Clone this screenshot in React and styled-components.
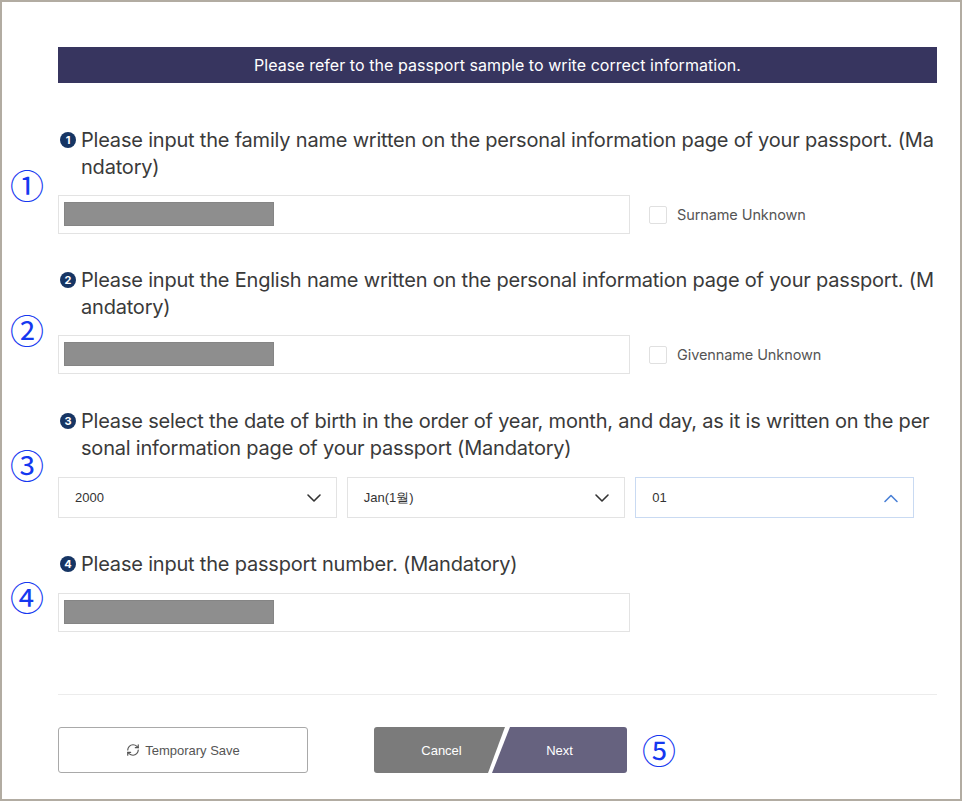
import React from 'react'
import styled, { createGlobalStyle } from 'styled-components'
import { RefreshCw } from 'lucide-react'

const GlobalStyle = createGlobalStyle`
    html, body {
        margin: 0;
        padding: 0;
        background: #fff;
    }
    * {
        box-sizing: border-box;
    }
`

const fields = [
    {
        no: 1,
        mark: '①',
        markTop: 41,
        gap: 44,
        title: 'Please input the family name written on the personal information page of your passport. (Mandatory)',
        check: 'Surname Unknown',
    },
    {
        no: 2,
        mark: '②',
        markTop: 46,
        gap: 33,
        title: 'Please input the English name written on the personal information page of your passport. (Mandatory)',
        check: 'Givenname Unknown',
    },
]

const Chevron = ({ up, color }) => (
    <svg width="16" height="10" viewBox="0 0 16 10">
        <path
            d={up ? 'M2 8.5 L8 2.5 L14 8.5' : 'M2 2 L8 8 L14 2'}
            fill="none"
            stroke={color}
            strokeWidth="1.6"
            strokeLinecap="round"
            strokeLinejoin="round"
        />
    </svg>
)

const App = () => {
    return (
        <Frame>
            <GlobalStyle />
            <Banner>Please refer to the passport sample to write correct information.</Banner>

            {fields.map(f => (
                <Section key={f.no} gap={f.gap}>
                    <Mark top={f.markTop}>{f.mark}</Mark>
                    <Heading>
                        <Badge>{f.no}</Badge>
                        <span>{f.title}</span>
                    </Heading>
                    <FieldRow>
                        <TextBox>
                            <Redacted />
                        </TextBox>
                        <CheckLabel>
                            <CheckBox />
                            {f.check}
                        </CheckLabel>
                    </FieldRow>
                </Section>
            ))}

            <Section gap={34}>
                <Mark top={40}>③</Mark>
                <Heading>
                    <Badge>3</Badge>
                    <span>
                        Please select the date of birth in the order of year, month, and day, as it is written on the
                        personal information page of your passport (Mandatory)
                    </span>
                </Heading>
                <SelectRow>
                    <Select>
                        <span>2000</span>
                        <Chevron color="#333" />
                    </Select>
                    <Select>
                        <span>Jan(1월)</span>
                        <Chevron color="#333" />
                    </Select>
                    <Select open>
                        <span>01</span>
                        <Chevron up color="#4a80d6" />
                    </Select>
                </SelectRow>
            </Section>

            <Section gap={33}>
                <Mark top={29}>④</Mark>
                <Heading>
                    <Badge>4</Badge>
                    <span>Please input the passport number. (Mandatory)</span>
                </Heading>
                <FieldRow space={15}>
                    <TextBox>
                        <Redacted />
                    </TextBox>
                </FieldRow>
            </Section>

            <Divider />

            <ButtonRow>
                <SaveButton>
                    <RefreshCw size={14} strokeWidth={2} />
                    Temporary Save
                </SaveButton>
                <StepButtons>
                    <CancelButton>Cancel</CancelButton>
                    <NextButton>Next</NextButton>
                    <StepMark>⑤</StepMark>
                </StepButtons>
            </ButtonRow>
        </Frame>
    )
}

export default App

const Frame = styled.div`
    width: 962px;
    height: 801px;
    border: 2px solid #b2aca2;
    padding: 45px 23px 0 56px;
    font-family: Inter, 'Liberation Sans', sans-serif;
    color: #333;
    overflow: hidden;
`

const Banner = styled.div`
    height: 36px;
    background: #37355f;
    color: #fff;
    font-size: 16px;
    display: flex;
    align-items: center;
    justify-content: center;
    letter-spacing: 0.05px;
`

const Section = styled.section`
    position: relative;
    margin-top: ${props => props.gap}px;
`

const Mark = styled.div`
    position: absolute;
    left: -48px;
    top: ${props => props.top}px;
    font-size: 34px;
    line-height: 1;
    color: #1538f0;
    font-family: 'Noto Sans CJK JP', 'DejaVu Sans', sans-serif;
`

const Heading = styled.div`
    display: flex;
    align-items: flex-start;
    font-size: 20px;
    line-height: 27px;
    color: #3a3a3a;
    letter-spacing: -0.2px;
    word-break: break-all;
`

const Badge = styled.span`
    flex: none;
    width: 16px;
    height: 16px;
    margin: 5px 5px 0 2px;
    border-radius: 50%;
    background: #163564;
    color: #fff;
    font-size: 11px;
    font-weight: bold;
    line-height: 16px;
    text-align: center;
    letter-spacing: 0;
`

const FieldRow = styled.div`
    display: flex;
    align-items: center;
    margin-top: ${props => props.space || 14}px;
`

const TextBox = styled.div`
    width: 572px;
    height: 39px;
    border: 1px solid #e3e3e3;
    padding: 6px 5px;
`

const Redacted = styled.div`
    width: 210px;
    height: 24px;
    background: #8e8e8e;
    border: 1px solid #858585;
`

const CheckLabel = styled.label`
    display: flex;
    align-items: center;
    gap: 10px;
    margin-left: 19px;
    font-size: 14.5px;
    color: #555;
    letter-spacing: -0.1px;
`

const CheckBox = styled.span`
    width: 18px;
    height: 18px;
    border: 1px solid #e0e0e0;
    border-radius: 2px;
`

const SelectRow = styled.div`
    display: flex;
    gap: 10px;
    margin-top: 15px;
    width: 856px;
`

const Select = styled.div`
    width: 279px;
    height: 41px;
    border: 1px solid ${props => (props.open ? '#c9daf2' : '#e3e3e3')};
    display: flex;
    align-items: center;
    justify-content: space-between;
    padding: 0 14px 0 16px;
    font-family: 'Liberation Sans', Arial, sans-serif;
    font-size: 13px;
    color: #333;
`

const Divider = styled.hr`
    margin: 62px 0 0;
    border: none;
    border-top: 1px solid #ececec;
`

const ButtonRow = styled.div`
    display: flex;
    align-items: center;
    margin-top: 32px;
`

const SaveButton = styled.button`
    width: 250px;
    height: 46px;
    border: 1px solid #a9a9a9;
    border-radius: 3px;
    background: #fff;
    display: flex;
    align-items: center;
    justify-content: center;
    gap: 5px;
    font-family: 'Liberation Sans', Arial, sans-serif;
    font-size: 13px;
    color: #555;
    padding: 0;

    svg {
        color: #555;
    }
`

const StepButtons = styled.div`
    display: flex;
    align-items: center;
    margin-left: 66px;
`

const StepButton = styled.button`
    height: 46px;
    border: none;
    padding: 0;
    color: #fff;
    font-family: 'Liberation Sans', Arial, sans-serif;
    font-size: 13px;
    cursor: pointer;
`

const CancelButton = styled(StepButton)`
    width: 131px;
    background: #7b7b7b;
    padding-left: 4px;
    border-radius: 3px 0 0 3px;
    clip-path: polygon(0 0, 100% 0, calc(100% - 17px) 100%, 0 100%);
`

const NextButton = styled(StepButton)`
    width: 135px;
    margin-left: -13px;
    background: #66627f;
    border-radius: 0 3px 3px 0;
    clip-path: polygon(18px 0, 100% 0, 100% 100%, 0 100%);
`

const StepMark = styled.span`
    margin-left: 15px;
    font-size: 34px;
    line-height: 1;
    color: #1538f0;
    font-family: 'Noto Sans CJK JP', 'DejaVu Sans', sans-serif;
`
